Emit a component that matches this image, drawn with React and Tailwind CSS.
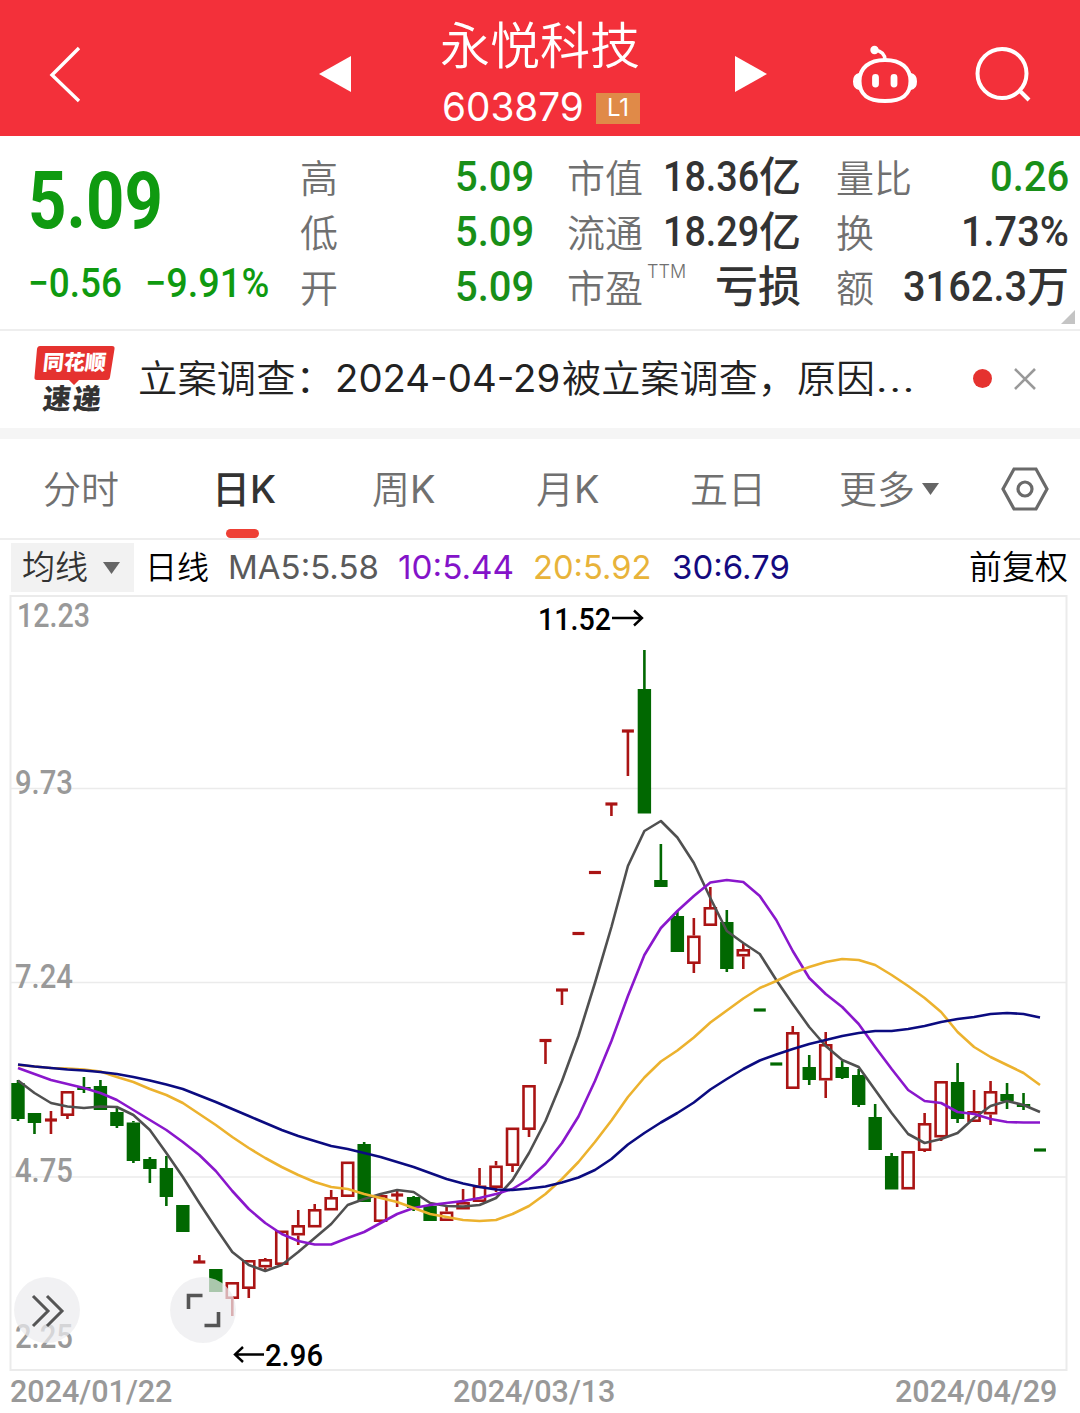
import { useLayoutEffect, useRef } from 'react';

/* Single line of text condensed or stretched to a fixed width. */
function Fit({ w, className = '', children }) {
  const ref = useRef(null);
  useLayoutEffect(() => {
    const el = ref.current;
    el.style.transform = `scaleX(${w / el.offsetWidth})`;
  }, [w]);
  return (
    <span className={`block shrink-0 whitespace-nowrap ${className}`} style={{ width: w }}>
      <span ref={ref} className="inline-block origin-left">{children}</span>
    </span>
  );
}

const STEP = 16.484;
const cx = (i) => 18 + STEP * i;

/* [kind, high, bodyTop, bodyBottom, low] */
const CANDLES = [
  ['g', 1080, 1083, 1119, 1121], ['g', 1113, 1113, 1123, 1134], ['r', 1111, 1120, 1120, 1134], ['r', 1091, 1091, 1116, 1119],
  ['g', 1077, 1087, 1090, 1093], ['g', 1080, 1086, 1110, 1110], ['g', 1107, 1112, 1126, 1128], ['g', 1121, 1122.5, 1161, 1163],
  ['g', 1157, 1159, 1169, 1183], ['g', 1156, 1168, 1197, 1206], ['g', 1205, 1205, 1232, 1232], ['r', 1255, 1262, 1262, 1262],
  ['g', 1269, 1269, 1292, 1292], ['r', 1282, 1282, 1299, 1316], ['r', 1260, 1260, 1289, 1298], ['r', 1258, 1259, 1267.5, 1271],
  ['r', 1230.5, 1230.5, 1265, 1265], ['r', 1210, 1225, 1235.5, 1245], ['r', 1204, 1209, 1227.5, 1227.5], ['r', 1190, 1197, 1210.5, 1210.5],
  ['r', 1161.5, 1161.5, 1197, 1197], ['g', 1142, 1144, 1202, 1202], ['r', 1195, 1195, 1222, 1222], ['r', 1189, 1195, 1195, 1207],
  ['g', 1196, 1197, 1208, 1211], ['g', 1206, 1206, 1221, 1221], ['r', 1207, 1211.5, 1221, 1221], ['r', 1189, 1202, 1209.5, 1209.5],
  ['r', 1168, 1185.5, 1202, 1202], ['r', 1161, 1165.5, 1188, 1192], ['r', 1127.5, 1127.5, 1166, 1172], ['r', 1085, 1085, 1130, 1137],
  ['r', 1040.5, 1040.5, 1040.5, 1064], ['r', 990, 990, 990, 1005], ['r', 933.5, 933.5, 933.5, 933.5], ['r', 872.5, 872.5, 872.5, 872.5],
  ['r', 804, 804, 804, 816], ['r', 731, 731, 731, 776], ['g', 650, 689, 813.5, 813.5], ['g', 844, 880, 887, 887],
  ['g', 911, 916, 952, 952], ['r', 918, 935.5, 964, 973], ['r', 887, 907, 926, 926], ['g', 910, 922, 969, 972],
  ['r', 943, 949, 956.5, 969], ['g', 1010, 1010, 1010, 1010], ['g', 1064, 1064, 1064, 1064], ['r', 1026, 1032, 1089, 1089],
  ['g', 1055, 1067, 1080, 1085], ['r', 1032, 1044, 1080.5, 1098], ['g', 1061, 1067, 1078, 1079], ['g', 1069, 1075, 1105, 1107],
  ['g', 1104, 1117, 1150, 1150], ['g', 1153, 1156, 1189.5, 1189.5], ['r', 1151, 1151, 1189.5, 1189.5], ['r', 1113, 1123, 1151, 1152],
  ['r', 1081, 1081, 1137.5, 1141], ['g', 1063, 1082, 1119, 1123], ['r', 1090, 1111, 1122, 1122], ['r', 1081, 1091, 1114.5, 1125],
  ['g', 1083, 1094, 1101, 1109], ['g', 1093, 1104, 1107, 1110], ['g', 1150, 1150, 1150, 1150],
];

const MA5 = [1080.5, 1093, 1103, 1106.5, 1108, 1106.5, 1107, 1115, 1130, 1153, 1177, 1203, 1228, 1252, 1265, 1271, 1265, 1252, 1238, 1224, 1205, 1199, 1194, 1190, 1192, 1203, 1206, 1206.5, 1205, 1198, 1180, 1153, 1121, 1081, 1036, 983, 927, 866, 831, 821, 837.5, 863, 898, 931, 943, 954, 980, 1004, 1027, 1046, 1060, 1067, 1090, 1113, 1134, 1143, 1139, 1133, 1118, 1106, 1101, 1105, 1112];
const MA10 = [1068, 1074, 1080, 1084, 1088, 1093, 1100, 1110, 1120, 1130, 1142, 1155, 1171, 1191, 1209, 1223, 1234, 1241, 1244.5, 1244.5, 1238, 1232, 1223, 1214, 1208, 1205, 1203, 1201, 1198, 1194, 1189, 1179, 1164, 1143, 1116.5, 1081, 1041, 996, 955, 928, 911, 896, 882.5, 880, 882, 896, 920, 951, 978, 994, 1007, 1024, 1047, 1069, 1090, 1101, 1103, 1112, 1114, 1119, 1122, 1122.5, 1122.5];
const MA20 = [1065, 1066.5, 1068, 1068.5, 1069.5, 1071.5, 1077, 1082, 1089, 1095, 1103, 1114, 1125, 1137, 1148, 1158, 1167, 1175, 1182, 1187, 1189, 1194, 1198, 1202, 1208, 1214, 1217, 1220, 1221, 1220, 1214, 1206, 1194, 1179, 1162, 1142, 1120.5, 1097, 1077.5, 1061.5, 1050.5, 1037.5, 1022.5, 1010.5, 998.5, 988, 981, 973, 967, 962, 959, 960, 965, 975, 986, 998, 1012, 1032, 1047, 1057, 1065, 1073, 1085];
const MA30 = [1064.5, 1066.5, 1068, 1069.5, 1070.5, 1072, 1074, 1077, 1080.5, 1084.5, 1089, 1095.5, 1102, 1109, 1116, 1123, 1130, 1136, 1141, 1146, 1149, 1153, 1157, 1162, 1167, 1173, 1179, 1183.5, 1187, 1189.5, 1190, 1188.5, 1186.5, 1182.5, 1177.5, 1170, 1159, 1144.5, 1133, 1122.5, 1113, 1102.5, 1089.5, 1079, 1069, 1060.5, 1054.5, 1049, 1044, 1040, 1036, 1033, 1031, 1031, 1029, 1026, 1022, 1019, 1017, 1014, 1013, 1014, 1017.5];

const points = (ma) => ma.map((y, i) => `${cx(i)},${y}`).join(' ');

function Candle({ x, d: [kind, high, top, bottom, low] }) {
  const color = kind === 'g' ? '#016801' : '#aa1414';
  const flat = top === bottom;
  return (
    <g stroke={color} strokeWidth="2.6" fill="none">
      {high < top && <path d={`M${x} ${high}V${top}`} />}
      {low > bottom && <path d={`M${x} ${bottom}V${low}`} />}
      {flat && <path d={`M${x - 6} ${top}H${x + 6}`} strokeWidth="3.2" />}
      {!flat && kind === 'g' && <rect x={x - 6.7} y={top} width="13.4" height={bottom - top} fill={color} stroke="none" />}
      {!flat && kind === 'r' && <rect x={x - 5.5} y={top + 1.3} width="11" height={bottom - top - 2.6} />}
    </g>
  );
}

function Chart() {
  return (
    <svg className="block h-[776px] w-full overflow-visible" viewBox="0 595 1080 776" fontFamily="Roboto, sans-serif" fontWeight="500">
      <g stroke="#ebebeb" strokeWidth="2" fill="none">
        <rect x="10.5" y="596" width="1056" height="774" />
        <path strokeWidth="1.6" d="M11 788.5H1066M11 982.5H1066M11 1177H1066" />
      </g>
      <g fill="#999" fontSize="33">
        <text x="17" y="627" textLength="73" lengthAdjust="spacingAndGlyphs">12.23</text>
        <text x="15" y="794" textLength="58" lengthAdjust="spacingAndGlyphs">9.73</text>
        <text x="15" y="988" textLength="58" lengthAdjust="spacingAndGlyphs">7.24</text>
        <text x="15" y="1182" textLength="58" lengthAdjust="spacingAndGlyphs">4.75</text>
        <text x="15" y="1348" textLength="58" lengthAdjust="spacingAndGlyphs">2.25</text>
      </g>
      {CANDLES.map((d, i) => <Candle key={i} x={cx(i)} d={d} />)}
      <g fill="none" strokeWidth="2.6" strokeLinejoin="round">
        <polyline points={points(MA5)} stroke="#505050" />
        <polyline points={points(MA10)} stroke="#8a17cc" />
        <polyline points={points(MA20)} stroke="#ecb22e" />
        <polyline points={points(MA30)} stroke="#0b0b80" />
      </g>
      <g fill="#000" fontSize="32">
        <text x="538" y="629.5" textLength="73" lengthAdjust="spacingAndGlyphs">11.52</text>
        <text x="265" y="1366" textLength="58" lengthAdjust="spacingAndGlyphs">2.96</text>
      </g>
      <g fill="none" stroke="#000" strokeWidth="2.4">
        <path d="M612 618H642M634 610.5L642 618L634 625.5" />
        <path d="M264 1354.500H235M243 1347L235 1354.500L243 1362" />
      </g>
      <g fill="#ececee" fillOpacity="0.72">
        <circle cx="47" cy="1310" r="33" />
        <circle cx="203" cy="1310" r="33" />
      </g>
      <g fill="none" stroke="#555" strokeWidth="3">
        <path d="M33 1296L48 1311L33 1326M47 1296L62 1311L47 1326" />
        <path strokeWidth="3.6" d="M188.500 1309V1295.500H202.500M218.500 1312V1325.500H204.500" />
      </g>
    </svg>
  );
}

function Row({ label, sup, children }) {
  return (
    <div className="flex h-[55px] items-center justify-between">
      <div className="-mt-[2px] flex text-[38px] font-[350] leading-none text-[#707070]">
        {label}
        {sup && <span className="-mt-[6px] ml-[4px] font-['Inter'] text-[18px] font-light leading-none">{sup}</span>}
      </div>
      <div className="-mt-1 flex items-center leading-none">{children}</div>
    </div>
  );
}

const num = "font-['Roboto'] font-medium leading-none";

export default function App() {
  return (
    <div className="h-[1413px] w-[1080px] overflow-hidden bg-white font-['Inter','Noto_Sans_CJK_SC',sans-serif]">
      <header className="flex h-[136px] items-center bg-[#f3303a] text-white">
        <svg className="ml-[46px] mt-3 h-[60px] w-[40px]" viewBox="0 0 40 60" fill="none" stroke="#fff" strokeWidth="3.4"><path d="M33 4L6 31L33 57" /></svg>
        <svg className="ml-[232px] mt-3 h-[36px] w-[36px]" viewBox="0 0 36 36" fill="#fff"><path d="M1 18L33 0V36Z" /></svg>
        <div className="ml-[86px] flex w-[200px] flex-col">
          <div className="h-[64px] pt-[2px] text-[50px] font-[350] leading-[64px]">永悦科技</div>
          <div className="mt-4 flex h-[32px] items-center justify-between">
            <Fit w={142} className="-mt-1 ml-[2px] text-[39px] font-normal leading-none">603879</Fit>
            <span className="flex h-[31px] w-[44px] items-center justify-center bg-[#e08a48] text-[24px] font-normal leading-none">L1</span>
          </div>
        </div>
        <svg className="ml-[94px] mt-3 h-[36px] w-[36px]" viewBox="0 0 36 36" fill="#fff"><path d="M1 0L33 18L1 36Z" /></svg>
        <svg className="ml-[82px] mt-3 h-[62px] w-[66px]" viewBox="0 0 66 62" fill="none" stroke="#fff" strokeWidth="4">
          <path d="M33 17C49 17 58.500 25 58.500 38C58.500 52 50 58 33 58C16 58 7.500 52 7.500 38C7.500 25 17 17 33 17Z" />
          <path d="M33 17C33 11 29 8 23 7" strokeWidth="3.400" />
          <circle cx="22.500" cy="7" r="4.200" fill="#fff" stroke="none" />
          <path d="M7 30Q1 31 1 38.500Q1 46 7 47ZM59 30Q65 31 65 38.500Q65 46 59 47Z" fill="#fff" stroke="none" />
          <path d="M23.500 34.500V41M42 34.500V41" strokeWidth="6.800" strokeLinecap="round" />
        </svg>
        <svg className="ml-[55px] mt-3 h-[60px] w-[60px]" viewBox="0 0 60 60" fill="none" stroke="#fff" strokeWidth="4"><circle cx="29" cy="29.500" r="24.500" /><path d="M46 46L56 56" /></svg>
      </header>

      <section className="relative flex h-[195px] border-b-2 border-[#eeeeee] pt-[15px]">
        <div className="ml-[28px] w-[272px] text-[#0f9a10]">
          <Fit w={135} className="mt-[10px] font-['Roboto'] text-[79px] font-bold leading-[80px]">5.09</Fit>
          <div className="mt-[23px] flex text-[40px]">
            <Fit w={94} className={num}>−0.56</Fit>
            <Fit w={124} className={`ml-[23px] ${num}`}>−9.91%</Fit>
          </div>
        </div>
        <div className="w-[234px] text-[43px] text-[#188f18]">
          {['高', '低', '开'].map((l) => (
            <Row key={l} label={l}><Fit w={79} className={num}>5.09</Fit></Row>
          ))}
        </div>
        <div className="ml-[33px] w-[234px] text-[42px] text-[#333]">
          <Row label="市值"><Fit w={96} className={num}>18.36</Fit><span className="font-medium">亿</span></Row>
          <Row label="流通"><Fit w={96} className={num}>18.29</Fit><span className="font-medium">亿</span></Row>
          <Row label="市盈" sup="TTM"><span className="text-[43px] font-medium">亏损</span></Row>
        </div>
        <div className="ml-[35px] w-[233px] text-[42px] text-[#333]">
          <Row label="量比"><Fit w={79} className={`text-[43px] text-[#188f18] ${num}`}>0.26</Fit></Row>
          <Row label="换"><Fit w={108} className={`text-[43px] ${num}`}>1.73%</Fit></Row>
          <Row label="额"><Fit w={124} className={num}>3162.3</Fit><span className="font-medium">万</span></Row>
        </div>
        <svg className="absolute bottom-[5px] right-[5px] h-[14px] w-[14px]" viewBox="0 0 14 14" fill="#c4c4c4"><path d="M14 0V14H0Z" /></svg>
      </section>

      <section className="flex h-[97px] items-center">
        <div className="relative ml-[33px] h-[70px] w-[84px]">
          <svg className="absolute inset-0 h-[70px] w-[84px]" viewBox="0 0 84 70" fill="#e5322f"><path d="M7 1H79Q82 1 81.500 4L77 32Q76.500 35 74 35H46L41 40L36 35H4Q1 35 1.500 32L4 4Q4.500 1 7 1Z" /></svg>
          <div className="absolute left-[10px] top-[7px] -skew-x-6 whitespace-nowrap text-[21px] font-black leading-[22px] text-white">同花顺</div>
          <div className="absolute left-[10px] top-[40px] -skew-x-6 whitespace-nowrap text-[28px] font-black leading-[28px] tracking-[2px] text-[#333]">速递</div>
        </div>
        <div className="-mt-[3px] ml-[21px] flex w-[780px] items-center text-[38px] font-[350] leading-none text-[#222]">
          <Fit w={197}>立案调查：</Fit>
          <Fit w={225} className="font-normal">2024-04-29</Fit>
          <Fit w={235} className="ml-[2px]">被立案调查，</Fit>
          <Fit w={78}>原因</Fit>
          <Fit w={40}>...</Fit>
        </div>
        <span className="-mt-[2px] ml-[55px] size-[19px] rounded-full bg-[#e5322f]" />
        <svg className="-mt-[2px] ml-[22px] h-[22px] w-[22px]" viewBox="0 0 22 22" stroke="#999" strokeWidth="2.600"><path d="M1 1L21 21M21 1L1 21" /></svg>
      </section>
      <div className="h-[11px] bg-[#f5f5f5]" />

      <nav className="flex h-[101px] items-center border-b-2 border-[#eeeeee] text-[38px] font-[350] leading-none text-[#707070]">
        <span className="ml-[43px] w-[169px]">分时</span>
        <span className="relative flex h-full w-[160px] items-center font-medium text-[#333]">
          日K
          <span className="absolute bottom-0 left-[14px] h-[9px] w-[33px] rounded-full bg-[#ee4035]" />
        </span>
        <span className="w-[164px]">周<span className="font-normal">K</span></span>
        <span className="w-[154px]">月<span className="font-normal">K</span></span>
        <span className="w-[149px]">五日</span>
        <span>更多</span>
        <svg className="ml-[7px] h-[12px] w-[17px]" viewBox="0 0 17 12" fill="#666"><path d="M0 0H17L8.500 12Z" /></svg>
        <svg className="ml-[62px] h-[44px] w-[48px]" viewBox="0 0 48 44" fill="none" stroke="#6a6a6a" strokeWidth="3.200"><path d="M13 2H35L46 22L35 42H13L2 22Z" /><circle cx="24" cy="22" r="7" /></svg>
      </nav>

      <div className="flex h-[55px] items-center leading-none">
        <div className="ml-[11px] flex h-[49px] w-[123px] items-center bg-[#f2f2f2] text-[33px] font-[350] text-[#333]">
          <span className="ml-[11px]">均线</span>
          <svg className="ml-[15px] h-[12px] w-[17px]" viewBox="0 0 17 12" fill="#666"><path d="M0 0H17L8.500 12Z" /></svg>
        </div>
        <span className="ml-[11px] text-[32px] font-[350] text-black">日线</span>
        <div className="-mt-px flex text-[33px] font-normal">
          <Fit w={151} className="ml-[19px] text-[#5a5a5a]">MA5:5.58</Fit>
          <Fit w={116} className="ml-[19px] text-[#8413c9]">10:5.44</Fit>
          <Fit w={119} className="ml-[19px] text-[#e8b33a]">20:5.92</Fit>
          <Fit w={118} className="ml-[20px] text-[#140a80]">30:6.79</Fit>
        </div>
        <span className="ml-auto mr-[12px] text-[33px] font-[350] text-black">前复权</span>
      </div>

      <Chart />

      <footer className={`flex h-[40px] items-center justify-between pl-[10px] pr-[23px] text-[32px] text-[#999] ${num}`}>
        <Fit w={162}>2024/01/22</Fit>
        <Fit w={162}>2024/03/13</Fit>
        <Fit w={162}>2024/04/29</Fit>
      </footer>
    </div>
  );
}
